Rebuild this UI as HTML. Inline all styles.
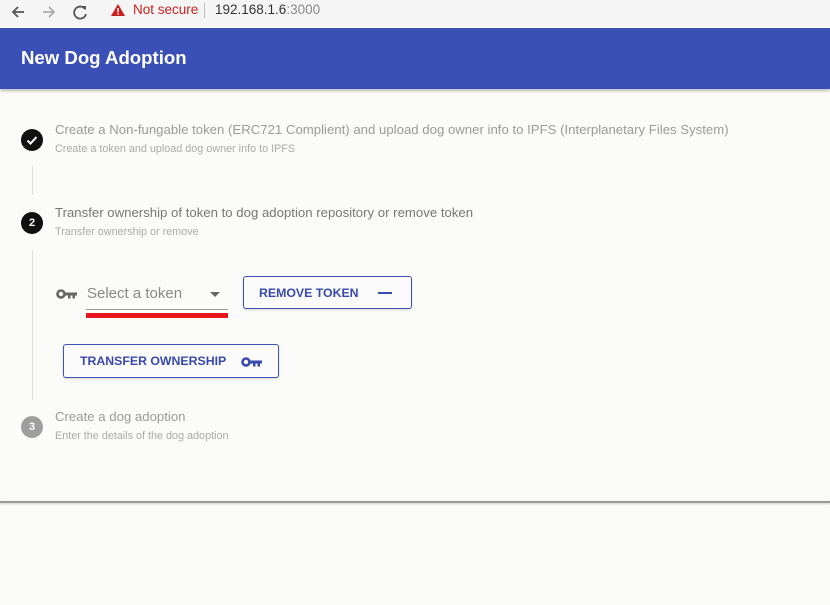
<!DOCTYPE html>
<html><head><style>
*{margin:0;padding:0;box-sizing:border-box}
body{width:830px;height:605px;background:#fbfbfa;font-family:"Liberation Sans",sans-serif;position:relative;overflow:hidden}
.a{position:absolute;white-space:nowrap}
.circ{position:absolute;width:22px;height:22px;border-radius:50%;color:#fff;font-size:11px;font-weight:bold;text-align:center;line-height:22px}
.t{font-size:13.2px;color:#9a9a9a}
.s{font-size:10.8px;color:#aaa}
.btn{position:absolute;border:1px solid #3f51b5;border-radius:3px;color:#3949ab;font-size:12.3px;font-weight:bold;background:#fbfbfb;box-shadow:0 1px 2px rgba(0,0,0,.15)}
</style></head><body>
<div class="a" style="left:0;top:0;width:830px;height:27px;background:#f5f5f5"></div>
<svg class="a" style="left:10px;top:3px" width="80" height="18" viewBox="0 0 80 18">
<path d="M14 9H4M8 4L3 9l5 5" stroke="#555" stroke-width="1.8" fill="none"/>
<path d="M33 9h10M39 4l5 5-5 5" stroke="#aaa" stroke-width="1.8" fill="none"/>
<path d="M75 6a6 6 0 1 0 1 5" stroke="#555" stroke-width="1.8" fill="none"/><path d="M72 3l4 0 0 4z" fill="#555"/>
</svg>
<svg class="a" style="left:110px;top:3px" width="16" height="14"><path d="M8 1L15 13H1z" fill="#c5221f"/><rect x="7.3" y="5" width="1.4" height="4.5" fill="#fff"/><rect x="7.3" y="10.5" width="1.4" height="1.4" fill="#fff"/></svg>
<div class="a" style="left:133px;top:2px;font-size:13.5px;color:#c5221f">Not secure</div>
<div class="a" style="left:204px;top:3px;width:1px;height:15px;background:#bbb"></div>
<div class="a" style="left:215px;top:2px;font-size:13.5px;color:#333">192.168.1.6<span style="color:#888">:3000</span></div>
<div class="a" style="left:0;top:28px;width:830px;height:61px;background:#3a50b7;box-shadow:0 2px 3px rgba(0,0,0,.25)"></div>
<div class="a" style="left:21px;top:47px;font-size:18.6px;font-weight:bold;color:#fff">New Dog Adoption</div>

<div class="circ" style="left:21px;top:129px;background:#111"><svg width="22" height="22"><path d="M6.5 11.5l3 3 6-6.5" stroke="#fff" stroke-width="2" fill="none"/></svg></div>
<div class="a t" style="left:55px;top:122px">Create a Non-fungable token (ERC721 Complient) and upload dog owner info to IPFS (Interplanetary Files System)</div>
<div class="a s" style="left:55px;top:143px">Create a token and upload dog owner info to IPFS</div>
<div class="a" style="left:32px;top:166px;width:1px;height:29px;background:#ddd"></div>

<div class="circ" style="left:21px;top:212px;background:#111">2</div>
<div class="a t" style="left:55px;top:205px;color:#777">Transfer ownership of token to dog adoption repository or remove token</div>
<div class="a s" style="left:55px;top:226px">Transfer ownership or remove</div>
<div class="a" style="left:32px;top:250px;width:1px;height:150px;background:#ddd"></div>

<svg class="a" style="left:56px;top:288px" width="22" height="12" viewBox="0 0 22 12"><circle cx="5" cy="6" r="3.5" stroke="#666" stroke-width="2.6" fill="none"/><path d="M8 4.5h13v3h-2v3h-2.5v-3h-2v3h-2.5v-3H8z" fill="#666"/></svg>
<div class="a" style="left:87px;top:285px;font-size:15px;color:#888">Select a token</div>
<svg class="a" style="left:210px;top:292px" width="10" height="6"><path d="M0 0h10L5 5z" fill="#666"/></svg>
<div class="a" style="left:86px;top:309px;width:142px;height:1px;background:#999"></div>
<div class="a" style="left:86px;top:313px;width:142px;height:5px;background:#e8141e"></div>

<div class="btn" style="left:243px;top:276px;width:169px;height:33px"><span class="a" style="left:15px;top:9px">REMOVE TOKEN</span><span class="a" style="left:134px;top:15px;width:14px;height:2px;background:#3949ab"></span></div>
<div class="btn" style="left:63px;top:344px;width:216px;height:34px"><span class="a" style="left:16px;top:9px">TRANSFER OWNERSHIP</span>
<svg class="a" style="left:177px;top:11px" width="22" height="12" viewBox="0 0 22 12"><circle cx="5" cy="6" r="3.5" stroke="#3949ab" stroke-width="2.6" fill="none"/><path d="M8 4.5h13v3h-2v3h-2.5v-3h-2v3h-2.5v-3H8z" fill="#3949ab"/></svg></div>

<div class="circ" style="left:21px;top:416px;background:#9e9e9e">3</div>
<div class="a t" style="left:55px;top:409px">Create a dog adoption</div>
<div class="a s" style="left:55px;top:430px">Enter the details of the dog adoption</div>

<div class="a" style="left:0;top:501px;width:830px;height:2px;background:#999;box-shadow:0 1px 2px rgba(0,0,0,.2)"></div>
</body></html>
